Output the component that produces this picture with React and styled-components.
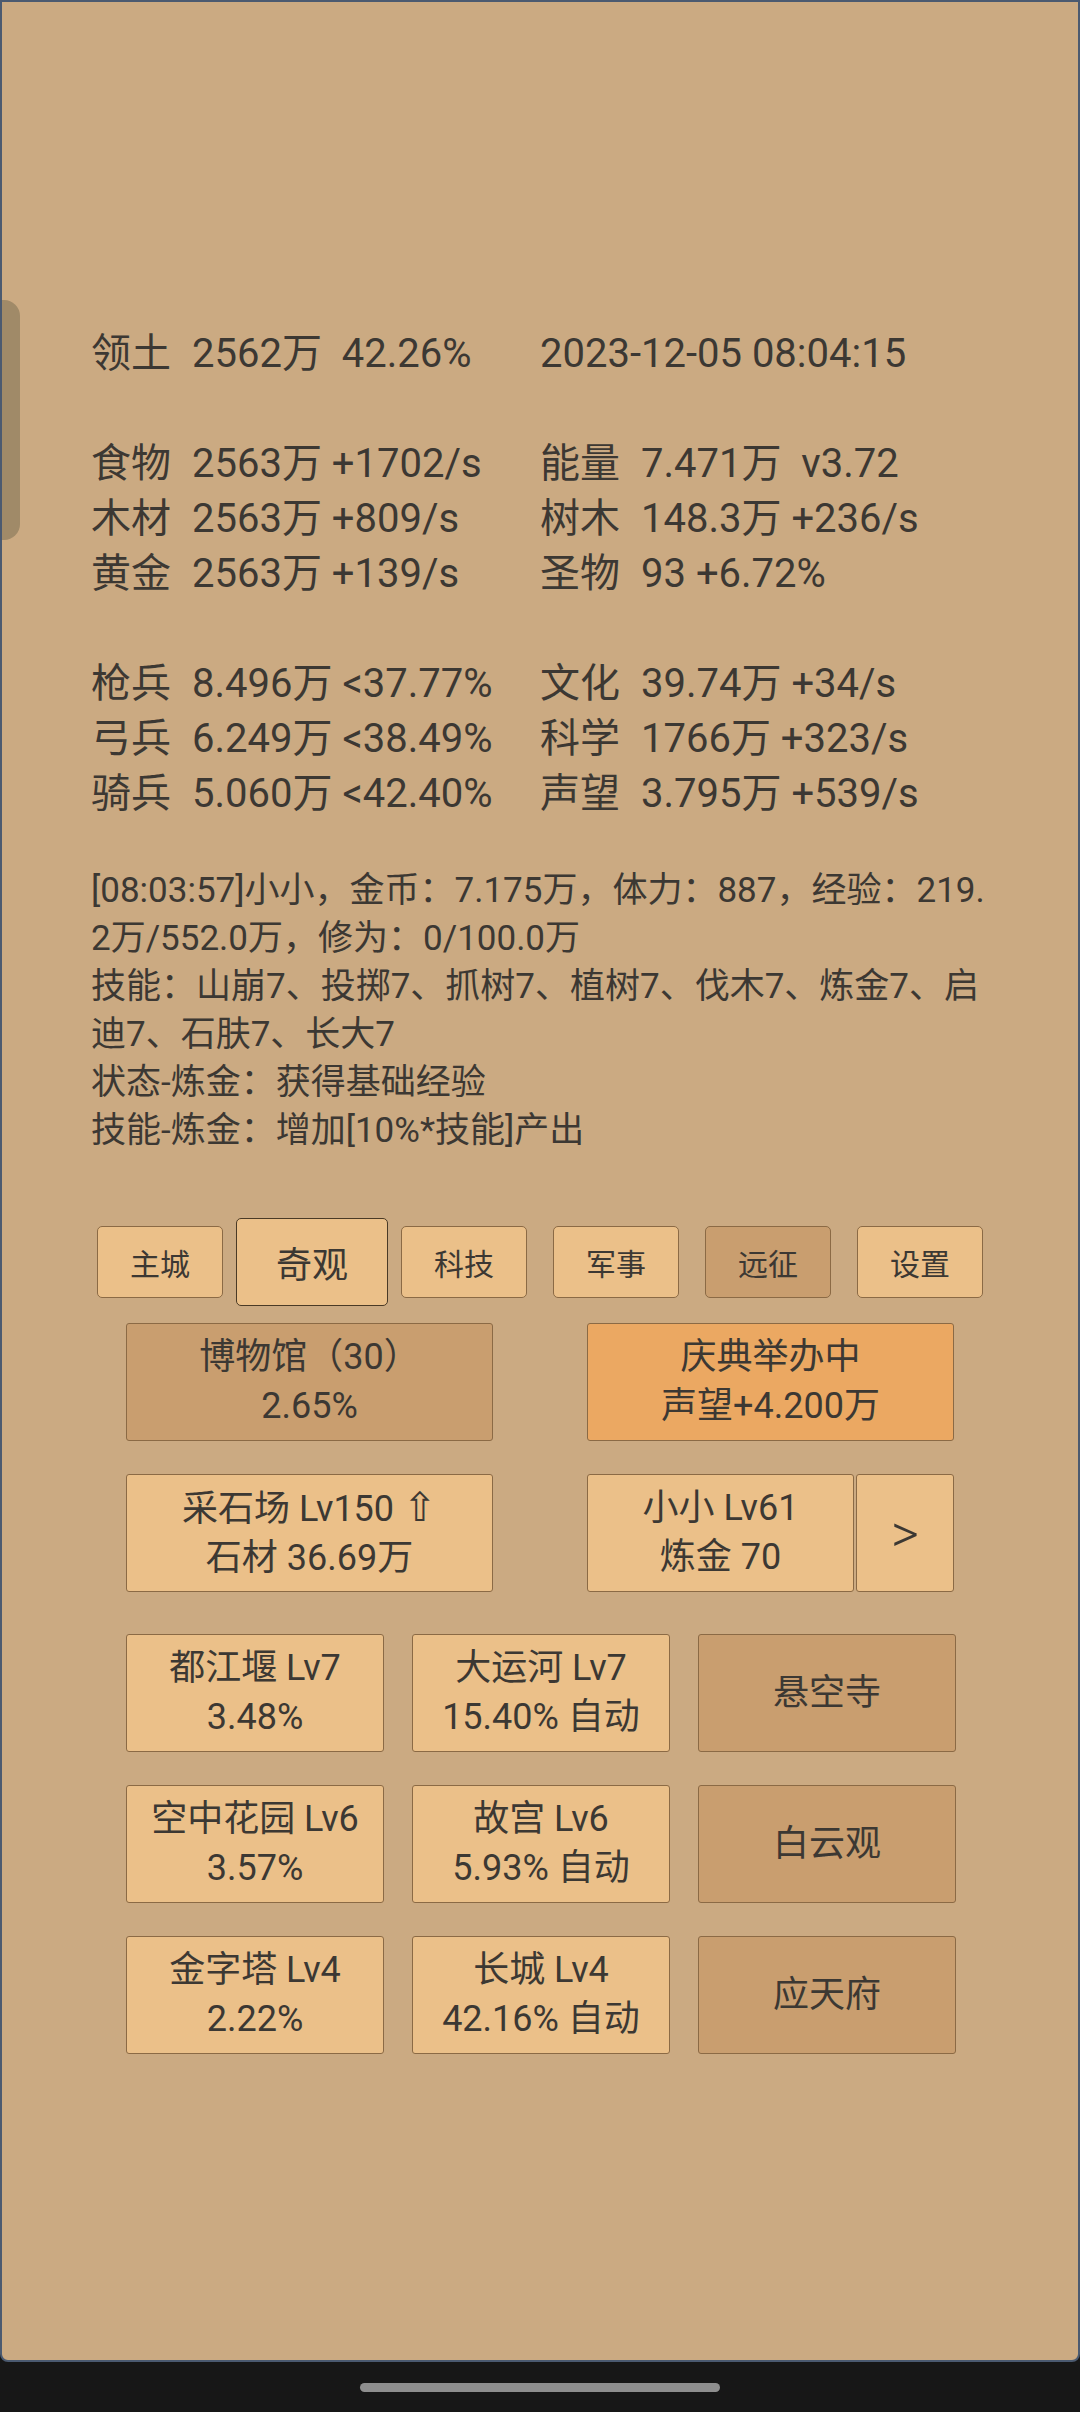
import React from "react";
import styled, { createGlobalStyle } from "styled-components";

const GlobalStyle = createGlobalStyle`
    body {
        margin: 0;
        background: #171717;
    }
    button {
        font: inherit;
        color: inherit;
        padding: 0;
    }
`;

const stats = [
    [
        { label: "领土", value: "2562万  42.26%", right: { value: "2023-12-05 08:04:15" } },
    ],
    [
        { label: "食物", value: "2563万 +1702/s", right: { label: "能量", value: "7.471万  v3.72" } },
        { label: "木材", value: "2563万 +809/s", right: { label: "树木", value: "148.3万 +236/s" } },
        { label: "黄金", value: "2563万 +139/s", right: { label: "圣物", value: "93 +6.72%" } },
    ],
    [
        { label: "枪兵", value: "8.496万 <37.77%", right: { label: "文化", value: "39.74万 +34/s" } },
        { label: "弓兵", value: "6.249万 <38.49%", right: { label: "科学", value: "1766万 +323/s" } },
        { label: "骑兵", value: "5.060万 <42.40%", right: { label: "声望", value: "3.795万 +539/s" } },
    ],
];

const logs = [
    "[08:03:57]小小，金币：7.175万，体力：887，经验：219.2万/552.0万，修为：0/100.0万",
    "技能：山崩7、投掷7、抓树7、植树7、伐木7、炼金7、启迪7、石肤7、长大7",
    "状态-炼金：获得基础经验",
    "技能-炼金：增加[10%*技能]产出",
];

const tabs = [
    { name: "主城" },
    { name: "奇观", active: true },
    { name: "科技" },
    { name: "军事" },
    { name: "远征", dark: true },
    { name: "设置" },
];

const wonders = [
    { lines: ["都江堰 Lv7", "3.48%"] },
    { lines: ["大运河 Lv7", "15.40% 自动"] },
    { lines: ["悬空寺"], tone: "dark" },
    { lines: ["空中花园 Lv6", "3.57%"] },
    { lines: ["故宫 Lv6", "5.93% 自动"] },
    { lines: ["白云观"], tone: "dark" },
    { lines: ["金字塔 Lv4", "2.22%"] },
    { lines: ["长城 Lv4", "42.16% 自动"] },
    { lines: ["应天府"], tone: "dark" },
];

const StatCell = ({ label, value }) => (
    <Cell>
        {label && <Label>{label}</Label>}
        <span>{value}</span>
    </Cell>
);

const App = () => {
    return (
        <>
            <GlobalStyle />
            <Screen>
                <ScrollHandle />

                <Stats>
                    {stats.map((group, gi) => (
                        <StatGroup key={gi}>
                            {group.map((row) => (
                                <StatRow key={row.label}>
                                    <StatCell label={row.label} value={row.value} />
                                    <StatCell label={row.right.label} value={row.right.value} />
                                </StatRow>
                            ))}
                        </StatGroup>
                    ))}
                </Stats>

                <Log>
                    {logs.map((line) => (
                        <p key={line}>{line}</p>
                    ))}
                </Log>

                <TabBar>
                    {tabs.map((t) => (
                        <TabSlot key={t.name}>
                            <Tab active={t.active} dark={t.dark}>
                                {t.name}
                            </Tab>
                        </TabSlot>
                    ))}
                </TabBar>

                <Panels>
                    <PanelRow>
                        <Panel width={367} tone="dark">
                            <span>博物馆（30）</span>
                            <span>2.65%</span>
                        </Panel>
                        <Panel width={367} tone="orange">
                            <span>庆典举办中</span>
                            <span>声望+4.200万</span>
                        </Panel>
                    </PanelRow>

                    <PanelRow gap={33}>
                        <Panel width={367}>
                            <span>采石场 Lv150 <Arrow>⇧</Arrow></span>
                            <span>石材 36.69万</span>
                        </Panel>
                        <HeroGroup>
                            <Panel width={267}>
                                <span>小小 Lv61</span>
                                <span>炼金 70</span>
                            </Panel>
                            <Panel width={98} big>
                                <span>&gt;</span>
                            </Panel>
                        </HeroGroup>
                    </PanelRow>

                    <WonderGrid>
                        {wonders.map((w) => (
                            <Panel key={w.lines[0]} tone={w.tone}>
                                {w.lines.map((l) => (
                                    <span key={l}>{l}</span>
                                ))}
                            </Panel>
                        ))}
                    </WonderGrid>
                </Panels>
            </Screen>

            <NavBar>
                <Pill />
            </NavBar>
        </>
    );
};

export default App;

const Screen = styled.div`
    position: relative;
    box-sizing: border-box;
    height: 2362px;
    padding-top: 324px;
    background: #cbaa82;
    border: 2px solid #4b5a70;
    border-radius: 0 0 8px 8px;
    color: #3c3833;
    font-family: Roboto, "Noto Sans CJK SC", sans-serif;
`;

const ScrollHandle = styled.div`
    position: absolute;
    left: 0;
    top: 298px;
    width: 18px;
    height: 240px;
    background: #a08a68;
    border-radius: 0 16px 16px 0;
`;

const Stats = styled.div`
    padding-left: 89px;
    font-size: 40px;
    line-height: 55px;
`;

const StatGroup = styled.div`
    & + & {
        margin-top: 55px;
    }
`;

const StatRow = styled.div`
    display: grid;
    grid-template-columns: 449px auto;
`;

const Cell = styled.div`
    display: flex;
    white-space: pre;
`;

const Label = styled.span`
    width: 101px;
    flex-shrink: 0;
`;

const Log = styled.div`
    margin-top: 46px;
    padding: 0 89px;
    font-size: 35px;
    line-height: 48px;
    word-break: break-all;

    p {
        margin: 0;
    }
`;

const TabBar = styled.div`
    display: flex;
    align-items: center;
    height: 88px;
    margin-top: 63px;
    padding: 0 82px;
`;

const TabSlot = styled.div`
    flex: 1;
    display: flex;
    justify-content: center;
`;

const Tab = styled.button`
    box-sizing: border-box;
    width: ${(p) => (p.active ? 152 : 126)}px;
    height: ${(p) => (p.active ? 88 : 72)}px;
    font-size: ${(p) => (p.active ? 36 : 30)}px;
    background: ${(p) => (p.dark ? "#c99e6f" : "#ebc089")};
    border: 1.5px solid ${(p) => (p.active ? "#4a3a26" : "#8b6a45")};
    border-radius: 5px;
    cursor: pointer;
`;

const Panels = styled.div`
    margin-top: 17px;
    padding: 0 124px;
`;

const PanelRow = styled.div`
    display: flex;
    justify-content: space-between;
    margin-top: ${(p) => p.gap || 0}px;
`;

const HeroGroup = styled.div`
    display: flex;
    gap: 2px;
`;

const tones = {
    light: "#ebc089",
    dark: "#c99e6f",
    orange: "#eba862",
};

const Panel = styled.div`
    box-sizing: border-box;
    width: ${(p) => (p.width ? `${p.width}px` : "auto")};
    height: 118px;
    display: flex;
    flex-direction: column;
    align-items: center;
    justify-content: center;
    background: ${(p) => tones[p.tone || "light"]};
    border: 1.5px solid #8b6a45;
    border-radius: 3px;
    font-size: ${(p) => (p.big ? 54 : 36)}px;
    font-weight: ${(p) => (p.big ? 300 : 400)};
    line-height: 49px;
    text-align: center;
    white-space: nowrap;
`;

const Arrow = styled.span`
    font-family: "DejaVu Sans", sans-serif;
    font-size: 40px;
    font-weight: 300;
`;

const WonderGrid = styled.div`
    display: grid;
    grid-template-columns: repeat(3, 258px);
    column-gap: 28px;
    row-gap: 33px;
    margin-top: 42px;
`;

const NavBar = styled.div`
    height: 50px;
    display: flex;
    align-items: center;
    justify-content: center;
    background: #171717;
`;

const Pill = styled.div`
    width: 360px;
    height: 9px;
    border-radius: 5px;
    background: #8e8e8e;
`;
